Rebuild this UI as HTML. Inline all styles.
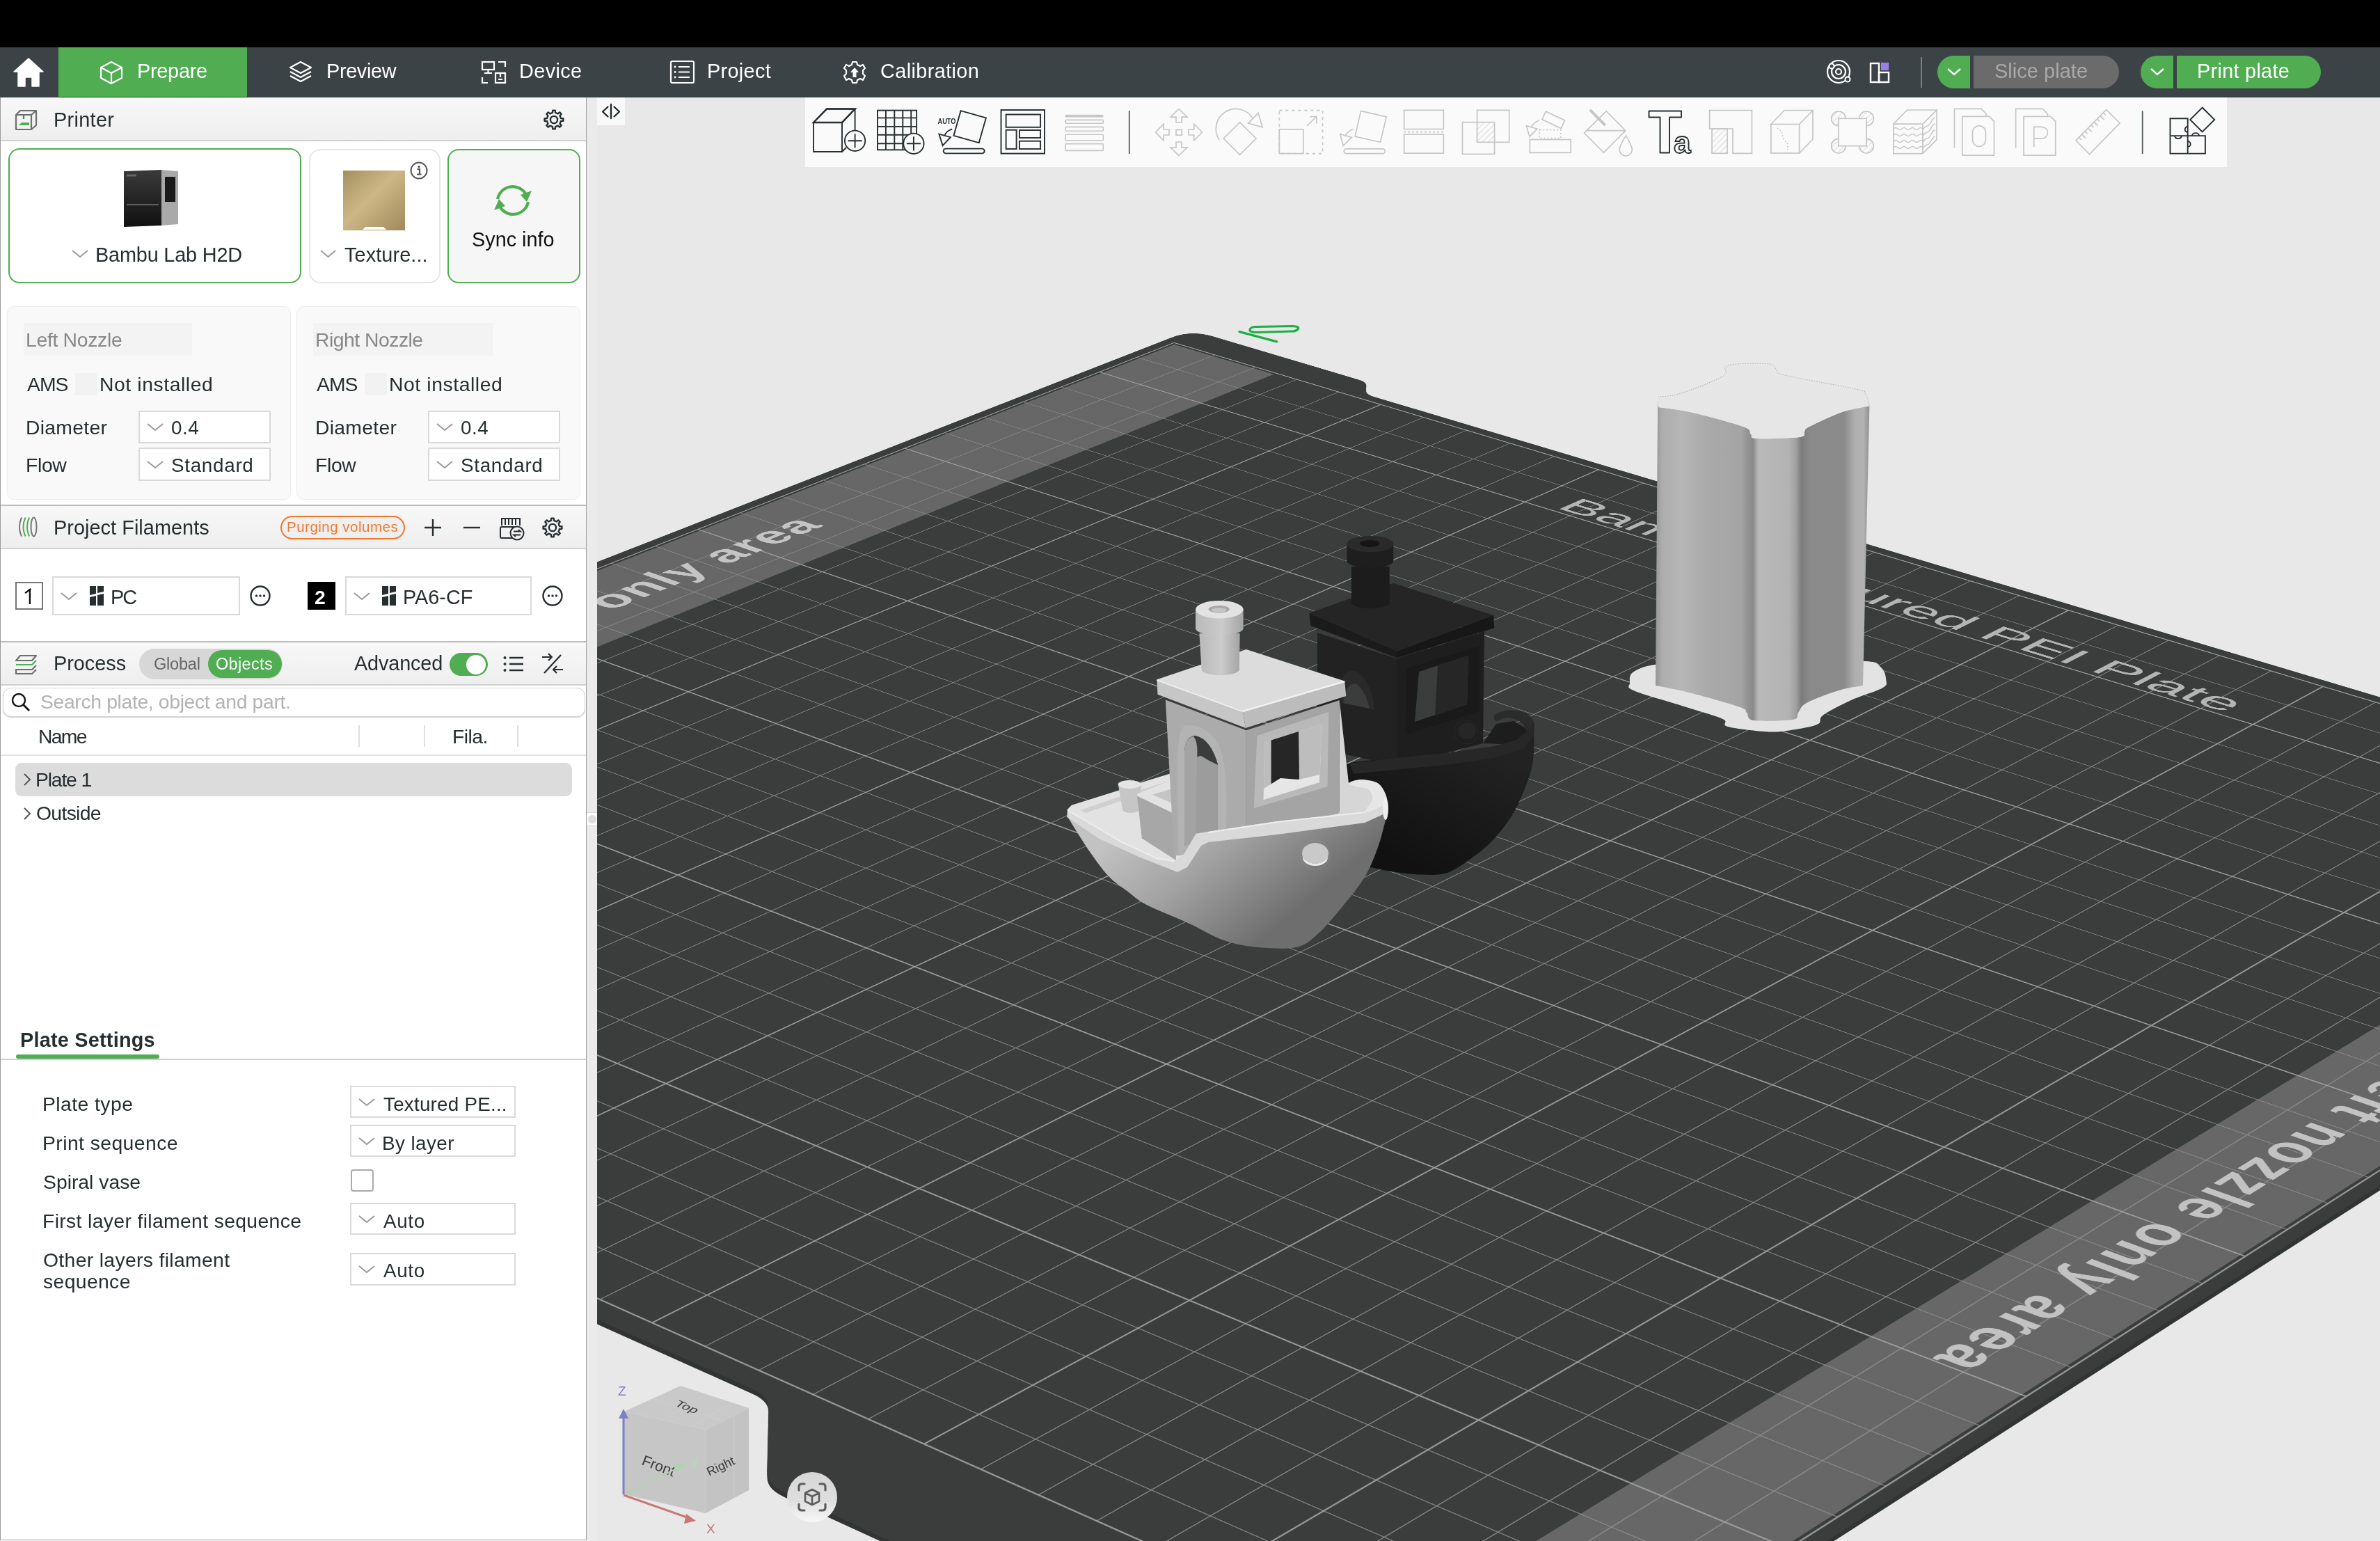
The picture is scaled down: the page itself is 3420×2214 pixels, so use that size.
<!DOCTYPE html><html><head><meta charset="utf-8"><style>
html,body{margin:0;padding:0;}
body{width:3420px;height:2214px;overflow:hidden;position:relative;background:#fff;font-family:"Liberation Sans", sans-serif;}
.t{position:absolute;white-space:nowrap;line-height:normal;font-family:"Liberation Sans", sans-serif;will-change:transform;}
svg{overflow:visible}
</style></head><body>
<div style="position:absolute;left:0px;top:0px;width:3420px;height:68px;background:#000"></div><div style="position:absolute;left:0px;top:68px;width:3420px;height:72px;background:#3c4346"></div><svg style="position:absolute;left:20px;top:82px;" width="44" height="44" viewBox="0 0 44 44" xmlns="http://www.w3.org/2000/svg"><path d="M21,2 L42,21 L36,21 L36,42 L26,42 L26,29 L16,29 L16,42 L6,42 L6,21 L0,21 Z" fill="#fff" stroke="#fff" stroke-width="1.5" stroke-linejoin="round"/></svg><div style="position:absolute;left:84px;top:68px;width:271px;height:72px;background:#50ad52"></div><svg style="position:absolute;left:143px;top:87px;" width="34" height="34" viewBox="0 0 34 34" xmlns="http://www.w3.org/2000/svg"><g fill="none" stroke="#fff" stroke-width="2.2" stroke-linejoin="round"><path d="M17,2 L32,10 L32,25 L17,33 L2,25 L2,10 Z"/><path d="M2,10 L17,18 L32,10 M17,18 L17,33"/></g></svg><div class="t" data-k="Prepare@199" data-tw="98.5" data-tx="199" style="left:197.0px;top:85.9px;font-size:28.84px;letter-spacing:-0.25px;color:#fff;font-weight:normal;">Prepare</div><svg style="position:absolute;left:414px;top:86px;" width="36" height="36" viewBox="0 0 36 36" xmlns="http://www.w3.org/2000/svg"><g fill="none" stroke="#fff" stroke-width="2.2" stroke-linejoin="round"><path d="M18,3 L33,11 L18,19 L3,11 Z"/><path d="M3,17 L18,25 L33,17"/><path d="M3,23 L18,31 L33,23"/></g></svg><div class="t" data-k="Preview@471" data-tw="99" data-tx="471" style="left:469.0px;top:85.9px;font-size:28.84px;letter-spacing:-0.333px;color:#fff;font-weight:normal;">Preview</div><svg style="position:absolute;left:690px;top:86px;" width="40" height="36" viewBox="0 0 40 36" xmlns="http://www.w3.org/2000/svg"><g fill="none" stroke="#fff" stroke-width="2.2"><rect x="3" y="3" width="17" height="11"/><path d="M11.5,14 V19 M6,19 H17"/><path d="M26,3 H36 V10"/><path d="M3,25 V33 H11"/><rect x="22" y="19" width="14" height="14"/><path d="M26,28 H32 M29,19 V25"/></g></svg><div class="t" data-k="Device@748" data-tw="87" data-tx="748" style="left:746.0px;top:85.9px;font-size:28.84px;letter-spacing:0.4px;color:#fff;font-weight:normal;">Device</div><svg style="position:absolute;left:962px;top:86px;" width="38" height="36" viewBox="0 0 38 36" xmlns="http://www.w3.org/2000/svg"><g fill="none" stroke="#fff" stroke-width="2.2"><rect x="2" y="2" width="33" height="31" rx="2"/><path d="M13,10 H29 M13,17.5 H29 M13,25 H29"/></g><g fill="#fff"><circle cx="8" cy="10" r="1.4"/><circle cx="8" cy="17.5" r="1.4"/><circle cx="8" cy="25" r="1.4"/></g></svg><div class="t" data-k="Project@1018" data-tw="90" data-tx="1018" style="left:1016.0px;top:85.9px;font-size:28.84px;letter-spacing:0.333px;color:#fff;font-weight:normal;">Project</div><svg style="position:absolute;left:1212px;top:87px;" width="32" height="34" viewBox="0 0 32 34" xmlns="http://www.w3.org/2000/svg"><g fill="none" stroke="#fff" stroke-width="2.2" stroke-linejoin="round"><path d="M13,2 H19 L20,6 L24,8 L28,6 L31,11 L28,14 L28,19 L31,22 L28,28 L24,26 L20,28 L19,32 H13 L12,28 L8,26 L4,28 L1,22 L4,19 L4,14 L1,11 L4,6 L8,8 L12,6 Z"/></g><path d="M16,10 L22,17 H18.5 V24 H13.5 V17 H10 Z" fill="#fff"/></svg><div class="t" data-k="Calibration@1266" data-tw="139" data-tx="1266" style="left:1265.0px;top:85.9px;font-size:28.84px;letter-spacing:0.4px;color:#fff;font-weight:normal;">Calibration</div><svg style="position:absolute;left:2622px;top:83px;" width="40" height="40" viewBox="0 0 40 40" xmlns="http://www.w3.org/2000/svg"><g fill="none" stroke="#fff" stroke-width="2.2"><circle cx="20" cy="20" r="16"/><circle cx="20" cy="20" r="10"/><circle cx="20" cy="20" r="4"/></g><circle cx="10" cy="12" r="3.5" fill="#3c4346" stroke="#fff" stroke-width="2"/><circle cx="33" cy="31" r="3.5" fill="#3c4346" stroke="#fff" stroke-width="2"/></svg><svg style="position:absolute;left:2685px;top:88px;" width="34" height="34" viewBox="0 0 34 34" xmlns="http://www.w3.org/2000/svg"><g fill="none" stroke="#fff" stroke-width="2.4"><rect x="3" y="3" width="12" height="27"/><rect x="15" y="16" width="14" height="14"/></g><rect x="18" y="2" width="11" height="11" fill="#9b7fe6"/></svg><div style="position:absolute;left:2760px;top:82px;width:2px;height:44px;background:#7a7f82"></div><div style="position:absolute;left:2784px;top:80px;width:47px;height:47px;background:#50ad52;border-radius:23.5px 0 0 23.5px"></div><svg style="position:absolute;left:2797px;top:97px;" width="22" height="12" viewBox="0 0 22 12" xmlns="http://www.w3.org/2000/svg"><polyline points="2,2 11.0,10 20,2" fill="none" stroke="#fff" stroke-width="2.4"/></svg><div style="position:absolute;left:2836px;top:80px;width:209px;height:47px;background:#6b6b6b;border-radius:0 23.5px 23.5px 0"></div><div class="t" data-k="Slice plate@2867" data-tw="132" data-tx="2867" style="left:2866.0px;top:85.9px;font-size:28.84px;letter-spacing:0.1px;color:#a9a9a9;font-weight:normal;">Slice plate</div><div style="position:absolute;left:3076px;top:80px;width:47px;height:47px;background:#50ad52;border-radius:23.5px 0 0 23.5px"></div><svg style="position:absolute;left:3089px;top:97px;" width="22" height="12" viewBox="0 0 22 12" xmlns="http://www.w3.org/2000/svg"><polyline points="2,2 11.0,10 20,2" fill="none" stroke="#fff" stroke-width="2.4"/></svg><div style="position:absolute;left:3128px;top:80px;width:207px;height:47px;background:#50ad52;border-radius:0 23.5px 23.5px 0"></div><div class="t" data-k="Print plate@3159" data-tw="130" data-tx="3159" style="left:3157.0px;top:85.9px;font-size:28.84px;letter-spacing:0.3px;color:#fff;font-weight:normal;">Print plate</div><div style="position:absolute;left:0px;top:139px;width:3420px;height:1px;background:#30363a"></div>
<div style="position:absolute;left:0px;top:140px;width:843px;height:2073px;background:#fff;border-left:1px solid #9c9c9c;border-right:1px solid #9c9c9c;border-bottom:1px solid #9c9c9c;box-sizing:border-box"></div><div style="position:absolute;left:1px;top:140px;width:841px;height:62px;background:linear-gradient(#f8f8f8,#eeeeee)"></div><div style="position:absolute;left:1px;top:201px;width:841px;height:2px;background:#cfcfcf"></div><svg style="position:absolute;left:20px;top:156px;" width="36" height="32" viewBox="0 0 36 32" xmlns="http://www.w3.org/2000/svg"><g fill="none" stroke="#6e6e6e" stroke-width="2.2" stroke-linejoin="round"><path d="M3,9 H25 V30 H3 Z"/><path d="M3,9 L9,3 H32 L25,9 M32,3 V24 L25,30"/><path d="M14,9 V15"/></g><path d="M7,24 L11,20 H22 V24 Z" fill="#50ad52"/></svg><div class="t" data-k="Printer@79" data-tw="85" data-tx="79" style="left:77.0px;top:155.9px;font-size:28.84px;letter-spacing:0.333px;color:#262e30;font-weight:normal;">Printer</div><svg style="position:absolute;left:781px;top:157px;" width="30" height="30" viewBox="0 0 30 30" xmlns="http://www.w3.org/2000/svg"><g fill="none" stroke="#262e30" stroke-width="2.4" stroke-linejoin="round"><path d="M25.06,12.96 L28.39,13.25 L28.39,16.75 L25.06,17.04 L23.55,20.67 L25.70,23.23 L23.23,25.70 L20.67,23.55 L17.04,25.06 L16.75,28.39 L13.25,28.39 L12.96,25.06 L9.33,23.55 L6.77,25.70 L4.30,23.23 L6.45,20.67 L4.94,17.04 L1.61,16.75 L1.61,13.25 L4.94,12.96 L6.45,9.33 L4.30,6.77 L6.77,4.30 L9.33,6.45 L12.96,4.94 L13.25,1.61 L16.75,1.61 L17.04,4.94 L20.67,6.45 L23.23,4.30 L25.70,6.77 L23.55,9.33 Z"/><circle cx="15.0" cy="15.0" r="5.10"/></g></svg><div style="position:absolute;left:12px;top:213px;width:421px;height:194px;border:2.5px solid #50ad52;border-radius:16px;box-sizing:border-box;background:#fff"></div><svg style="position:absolute;left:176px;top:242px;" width="82" height="84" viewBox="0 0 82 84" xmlns="http://www.w3.org/2000/svg"><defs><linearGradient id="pb" x1="0" x2="0" y1="0" y2="1"><stop offset="0" stop-color="#3a3a3a"/><stop offset="1" stop-color="#111"/></linearGradient></defs><path d="M2,4 L56,2 L56,82 L2,84 Z" fill="url(#pb)"/><path d="M56,2 L80,4 L80,80 L56,82 Z" fill="#a9a9a9"/><rect x="61" y="12" width="15" height="36" fill="#1a1a1a"/><path d="M6,52 H52" stroke="#777" stroke-width="1.5"/><path d="M6,10 H20" stroke="#666" stroke-width="3"/></svg><svg style="position:absolute;left:102px;top:358px;" width="26" height="13" viewBox="0 0 26 13" xmlns="http://www.w3.org/2000/svg"><polyline points="2,2 13.0,11 24,2" fill="none" stroke="#9a9a9a" stroke-width="2"/></svg><div class="t" data-k="Bambu Lab H2D@139" data-tw="208" data-tx="139" style="left:137.0px;top:349.9px;font-size:28.84px;letter-spacing:-0.167px;color:#262e30;font-weight:normal;">Bambu Lab H2D</div><div style="position:absolute;left:444px;top:214px;width:189px;height:193px;border:2px solid #e6e6e6;border-radius:16px;box-sizing:border-box;background:#fff"></div><svg style="position:absolute;left:491px;top:242px;" width="93" height="92" viewBox="0 0 93 92" xmlns="http://www.w3.org/2000/svg"><defs><linearGradient id="gold" x1="0" y1="0" x2="1" y2="1"><stop offset="0" stop-color="#a48f5e"/><stop offset="0.45" stop-color="#cdb786"/><stop offset="1" stop-color="#a08a5c"/></linearGradient></defs><rect x="2" y="3" width="89" height="86" fill="url(#gold)"/><path d="M30,88 L34,84 H60 L64,88 Z" fill="#fff"/></svg><svg style="position:absolute;left:588px;top:231px;" width="28" height="28" viewBox="0 0 28 28" xmlns="http://www.w3.org/2000/svg"><circle cx="14" cy="14" r="11.5" fill="none" stroke="#555" stroke-width="2"/><circle cx="14" cy="8.5" r="1.7" fill="#555"/><path d="M11.5,12 H15 V19 M11,19.5 H17.5" stroke="#555" stroke-width="2.2" fill="none"/></svg><svg style="position:absolute;left:459px;top:358px;" width="25" height="13" viewBox="0 0 25 13" xmlns="http://www.w3.org/2000/svg"><polyline points="2,2 12.5,11 23,2" fill="none" stroke="#9a9a9a" stroke-width="2"/></svg><div class="t" data-k="Texture...@495" data-tw="117" data-tx="495" style="left:495.0px;top:349.9px;font-size:28.84px;letter-spacing:0.111px;color:#262e30;font-weight:normal;">Texture...</div><div style="position:absolute;left:643px;top:214px;width:191px;height:193px;border:2.5px solid #50ad52;border-radius:16px;box-sizing:border-box;background:#f6f6f6"></div><svg style="position:absolute;left:702px;top:260px;" width="70" height="56" viewBox="0 0 70 56" xmlns="http://www.w3.org/2000/svg"><g fill="none" stroke="#50ad52" stroke-width="4.2"><path d="M13,26 A22,22 0 0 1 53,18"/><path d="M57,30 A22,22 0 0 1 17,38"/></g><path d="M62,14 L55,30 L46,20 Z" fill="#50ad52"/><path d="M8,42 L15,26 L24,36 Z" fill="#50ad52"/></svg><div class="t" data-k="Sync info@679" data-tw="117" data-tx="679" style="left:678.0px;top:327.9px;font-size:28.84px;letter-spacing:0.0px;color:#111;font-weight:normal;">Sync info</div><div style="position:absolute;left:10px;top:440px;width:408px;height:278px;background:#f9f9f9;border:1.5px solid #ececec;border-radius:10px;box-sizing:border-box"></div><div style="position:absolute;left:34px;top:464px;width:242px;height:47px;background:#f3f3f3"></div><div class="t" data-k="Left Nozzle@39" data-tw="136" data-tx="-1" style="left:37.0px;top:472.4px;font-size:28.32px;letter-spacing:-0.3px;color:#888888;font-weight:normal;">Left Nozzle</div><div class="t" data-k="AMS@39" data-tw="58" data-tx="-1" style="left:39.0px;top:536.4px;font-size:28.32px;letter-spacing:-1.0px;color:#262e30;font-weight:normal;">AMS</div><div style="position:absolute;left:108px;top:536px;width:32px;height:32px;background:#f2f2f2"></div><div class="t" data-k="Not installed@145" data-tw="159" data-tx="-1" style="left:143.0px;top:536.4px;font-size:28.32px;letter-spacing:0.583px;color:#262e30;font-weight:normal;">Not installed</div><div class="t" data-k="Diameter@39" data-tw="115" data-tx="-1" style="left:37.0px;top:598.4px;font-size:28.32px;letter-spacing:0.286px;color:#262e30;font-weight:normal;">Diameter</div><div style="position:absolute;left:199px;top:590px;width:190px;height:47px;background:#fff;border:2px solid #d9d9d9;box-sizing:border-box"></div><svg style="position:absolute;left:210px;top:607.0px;" width="26" height="13.0" viewBox="0 0 26 13.0" xmlns="http://www.w3.org/2000/svg"><polyline points="2,2 13.0,11.0 24,2" fill="none" stroke="#9a9a9a" stroke-width="2"/></svg><div class="t" data-k="0.4@247" data-tw="38" data-tx="-1" style="left:246.0px;top:598.8px;font-size:27.81px;letter-spacing:0.5px;color:#262e30;font-weight:normal;">0.4</div><div class="t" data-k="Flow@39" data-tw="57" data-tx="-1" style="left:37.0px;top:652.4px;font-size:28.32px;letter-spacing:-0.333px;color:#262e30;font-weight:normal;">Flow</div><div style="position:absolute;left:199px;top:643px;width:190px;height:48px;background:#fff;border:2px solid #d9d9d9;box-sizing:border-box"></div><svg style="position:absolute;left:210px;top:660.5px;" width="26" height="13.0" viewBox="0 0 26 13.0" xmlns="http://www.w3.org/2000/svg"><polyline points="2,2 13.0,11.0 24,2" fill="none" stroke="#9a9a9a" stroke-width="2"/></svg><div class="t" data-k="Standard@247" data-tw="115" data-tx="-1" style="left:246.0px;top:652.8px;font-size:27.81px;letter-spacing:0.714px;color:#262e30;font-weight:normal;">Standard</div><div style="position:absolute;left:426px;top:440px;width:408px;height:278px;background:#f9f9f9;border:1.5px solid #ececec;border-radius:10px;box-sizing:border-box"></div><div style="position:absolute;left:450px;top:464px;width:258px;height:47px;background:#f3f3f3"></div><div class="t" data-k="Right Nozzle@455" data-tw="151.6" data-tx="-1" style="left:453.0px;top:472.4px;font-size:28.32px;letter-spacing:-0.491px;color:#888888;font-weight:normal;">Right Nozzle</div><div class="t" data-k="AMS@455" data-tw="58" data-tx="-1" style="left:455.0px;top:536.4px;font-size:28.32px;letter-spacing:-1.0px;color:#262e30;font-weight:normal;">AMS</div><div style="position:absolute;left:524px;top:536px;width:32px;height:32px;background:#f2f2f2"></div><div class="t" data-k="Not installed@561" data-tw="159" data-tx="-1" style="left:559.0px;top:536.4px;font-size:28.32px;letter-spacing:0.583px;color:#262e30;font-weight:normal;">Not installed</div><div class="t" data-k="Diameter@455" data-tw="115" data-tx="-1" style="left:453.0px;top:598.4px;font-size:28.32px;letter-spacing:0.286px;color:#262e30;font-weight:normal;">Diameter</div><div style="position:absolute;left:615px;top:590px;width:190px;height:47px;background:#fff;border:2px solid #d9d9d9;box-sizing:border-box"></div><svg style="position:absolute;left:626px;top:607.0px;" width="26" height="13.0" viewBox="0 0 26 13.0" xmlns="http://www.w3.org/2000/svg"><polyline points="2,2 13.0,11.0 24,2" fill="none" stroke="#9a9a9a" stroke-width="2"/></svg><div class="t" data-k="0.4@663" data-tw="38" data-tx="-1" style="left:662.0px;top:598.8px;font-size:27.81px;letter-spacing:0.5px;color:#262e30;font-weight:normal;">0.4</div><div class="t" data-k="Flow@455" data-tw="57" data-tx="-1" style="left:453.0px;top:652.4px;font-size:28.32px;letter-spacing:-0.333px;color:#262e30;font-weight:normal;">Flow</div><div style="position:absolute;left:615px;top:643px;width:190px;height:48px;background:#fff;border:2px solid #d9d9d9;box-sizing:border-box"></div><svg style="position:absolute;left:626px;top:660.5px;" width="26" height="13.0" viewBox="0 0 26 13.0" xmlns="http://www.w3.org/2000/svg"><polyline points="2,2 13.0,11.0 24,2" fill="none" stroke="#9a9a9a" stroke-width="2"/></svg><div class="t" data-k="Standard@663" data-tw="115" data-tx="-1" style="left:662.0px;top:652.8px;font-size:27.81px;letter-spacing:0.714px;color:#262e30;font-weight:normal;">Standard</div><div style="position:absolute;left:1px;top:725px;width:841px;height:2px;background:#bdbdbd"></div><div style="position:absolute;left:1px;top:727px;width:841px;height:61px;background:linear-gradient(#f8f8f8,#eeeeee)"></div><div style="position:absolute;left:1px;top:787px;width:841px;height:2px;background:#cfcfcf"></div><svg style="position:absolute;left:23px;top:741px;" width="32" height="32" viewBox="0 0 32 32" xmlns="http://www.w3.org/2000/svg"><g fill="none" stroke-width="2"><path d="M8,2.5 Q2,16 8,29.5" stroke="#777"/><path d="M13.5,2.5 Q7.5,16 13.5,29.5" stroke="#50ad52"/><path d="M19,2.5 Q13,16 19,29.5" stroke="#50ad52"/><ellipse cx="25.5" cy="16" rx="4" ry="13.5" stroke="#777"/></g></svg><div class="t" data-k="Project Filaments@79" data-tw="221" data-tx="79" style="left:77.0px;top:741.9px;font-size:28.84px;letter-spacing:0.062px;color:#262e30;font-weight:normal;">Project Filaments</div><div style="position:absolute;left:403px;top:741px;width:179px;height:34px;border:2px solid #f0782c;border-radius:17px;box-sizing:border-box;background:#efefef"></div><div class="t" data-k="Purging volumes@413" data-tw="158" data-tx="412.5" style="left:411.5px;top:745.4px;font-size:20.5px;letter-spacing:0.5px;color:#ef7a2e;font-weight:normal;">Purging volumes</div><svg style="position:absolute;left:608px;top:744px;" width="28" height="28" viewBox="0 0 28 28" xmlns="http://www.w3.org/2000/svg"><path d="M14,2 V26 M2,14 H26" stroke="#262e30" stroke-width="2.4"/></svg><svg style="position:absolute;left:664px;top:744px;" width="28" height="28" viewBox="0 0 28 28" xmlns="http://www.w3.org/2000/svg"><path d="M2,14 H26" stroke="#262e30" stroke-width="2.4"/></svg><svg style="position:absolute;left:717px;top:741px;" width="40" height="36" viewBox="0 0 40 36" xmlns="http://www.w3.org/2000/svg"><g fill="none" stroke="#262e30" stroke-width="2"><path d="M4,14 V4 H30 V14"/><path d="M9,5 V13 M14,5 V13 M19,5 V13 M24,5 V13"/><rect x="2" y="16" width="26" height="16" rx="2"/></g><circle cx="26" cy="25" r="9.5" fill="#f2f2f2" stroke="#262e30" stroke-width="2"/><path d="M21,22.5 H31 L28,20 M31,27.5 H21 L24,30" fill="none" stroke="#262e30" stroke-width="1.8"/></svg><svg style="position:absolute;left:779px;top:743px;" width="30" height="30" viewBox="0 0 30 30" xmlns="http://www.w3.org/2000/svg"><g fill="none" stroke="#262e30" stroke-width="2.4" stroke-linejoin="round"><path d="M25.06,12.96 L28.39,13.25 L28.39,16.75 L25.06,17.04 L23.55,20.67 L25.70,23.23 L23.23,25.70 L20.67,23.55 L17.04,25.06 L16.75,28.39 L13.25,28.39 L12.96,25.06 L9.33,23.55 L6.77,25.70 L4.30,23.23 L6.45,20.67 L4.94,17.04 L1.61,16.75 L1.61,13.25 L4.94,12.96 L6.45,9.33 L4.30,6.77 L6.77,4.30 L9.33,6.45 L12.96,4.94 L13.25,1.61 L16.75,1.61 L17.04,4.94 L20.67,6.45 L23.23,4.30 L25.70,6.77 L23.55,9.33 Z"/><circle cx="15.0" cy="15.0" r="5.10"/></g></svg><div style="position:absolute;left:22px;top:836px;width:40px;height:40px;border:2px solid #777;box-sizing:border-box;background:#fff"></div><svg style="position:absolute;left:30px;top:842px;" width="20" height="30" viewBox="0 0 20 30" xmlns="http://www.w3.org/2000/svg"><path d="M12.9,4 V26" stroke="#0a0a0a" stroke-width="2.3"/><path d="M13.5,4.5 L7,9.5" stroke="#0a0a0a" stroke-width="2.3" stroke-linecap="square"/></svg><div style="position:absolute;left:75px;top:828px;width:270px;height:56px;background:#fff;border:2px solid #d9d9d9;box-sizing:border-box"></div><svg style="position:absolute;left:86px;top:849.5px;" width="26" height="13.0" viewBox="0 0 26 13.0" xmlns="http://www.w3.org/2000/svg"><polyline points="2,2 13.0,11.0 24,2" fill="none" stroke="#9a9a9a" stroke-width="2"/></svg><div class="t" data-k="@161" data-tw="0" data-tx="-1" style="left:161px;top:842.8px;font-size:27.81px;letter-spacing:0px;color:#262e30;font-weight:normal;"></div><div class="t" data-k="PC@161" data-tw="35" data-tx="161" style="left:159.0px;top:841.9px;font-size:28.84px;letter-spacing:-2.0px;color:#262e30;font-weight:normal;">PC</div><svg style="position:absolute;left:128px;top:841px;" width="24" height="30" viewBox="0 0 24 30" xmlns="http://www.w3.org/2000/svg"><path d="M1,1 H10 V12 L1,14 Z M12,1 H21 V9 L12,11 Z M1,17 L10,15 V29 H1 Z M12,14 L21,12 V29 H12 Z" fill="#262e30"/></svg><svg style="position:absolute;left:358px;top:840px;" width="32" height="32" viewBox="0 0 32 32" xmlns="http://www.w3.org/2000/svg"><circle cx="16" cy="16" r="13.5" fill="none" stroke="#262e30" stroke-width="2.4"/><g fill="#262e30"><circle cx="10.5" cy="16" r="1.7"/><circle cx="16" cy="16" r="1.7"/><circle cx="21.5" cy="16" r="1.7"/></g></svg><div style="position:absolute;left:442px;top:836px;width:40px;height:40px;background:#000"></div><div class="t" data-k="2@453" data-tw="0" data-tx="-1" style="left:452.0px;top:842.4px;font-size:28.32px;letter-spacing:0.0px;color:#fff;font-weight:bold;">2</div><div style="position:absolute;left:496px;top:828px;width:268px;height:56px;background:#fff;border:2px solid #d9d9d9;box-sizing:border-box"></div><svg style="position:absolute;left:507px;top:849.5px;" width="26" height="13.0" viewBox="0 0 26 13.0" xmlns="http://www.w3.org/2000/svg"><polyline points="2,2 13.0,11.0 24,2" fill="none" stroke="#9a9a9a" stroke-width="2"/></svg><div class="t" data-k="@581" data-tw="0" data-tx="-1" style="left:581px;top:842.8px;font-size:27.81px;letter-spacing:0px;color:#262e30;font-weight:normal;"></div><div class="t" data-k="PA6-CF@581" data-tw="98" data-tx="581" style="left:579.0px;top:841.9px;font-size:28.84px;letter-spacing:0.0px;color:#262e30;font-weight:normal;">PA6-CF</div><svg style="position:absolute;left:548px;top:841px;" width="24" height="30" viewBox="0 0 24 30" xmlns="http://www.w3.org/2000/svg"><path d="M1,1 H10 V12 L1,14 Z M12,1 H21 V9 L12,11 Z M1,17 L10,15 V29 H1 Z M12,14 L21,12 V29 H12 Z" fill="#262e30"/></svg><svg style="position:absolute;left:778px;top:840px;" width="32" height="32" viewBox="0 0 32 32" xmlns="http://www.w3.org/2000/svg"><circle cx="16" cy="16" r="13.5" fill="none" stroke="#262e30" stroke-width="2.4"/><g fill="#262e30"><circle cx="10.5" cy="16" r="1.7"/><circle cx="16" cy="16" r="1.7"/><circle cx="21.5" cy="16" r="1.7"/></g></svg><div style="position:absolute;left:1px;top:921px;width:841px;height:2px;background:#bdbdbd"></div><div style="position:absolute;left:1px;top:923px;width:841px;height:61px;background:linear-gradient(#f8f8f8,#eeeeee)"></div><div style="position:absolute;left:1px;top:983px;width:841px;height:2px;background:#cfcfcf"></div><svg style="position:absolute;left:21px;top:939px;" width="36" height="32" viewBox="0 0 36 32" xmlns="http://www.w3.org/2000/svg"><g fill="none" stroke-width="2.2" stroke-linejoin="round"><path d="M8,3 H31 L25,10 H2 Z" stroke="#6e6e6e"/><path d="M2,16 H25 L31,10" stroke="#50ad52"/><path d="M31,17 L25,23 H2 L2,29 H25 L31,23" stroke="#6e6e6e"/></g></svg><div class="t" data-k="Process@79" data-tw="101" data-tx="79" style="left:77.0px;top:936.9px;font-size:28.84px;letter-spacing:0.0px;color:#262e30;font-weight:normal;">Process</div><div style="position:absolute;left:200px;top:932px;width:206px;height:44px;background:#d7d7d7;border-radius:22px"></div><div style="position:absolute;left:299px;top:934px;width:106px;height:40px;background:#50ad52;border-radius:20px"></div><div class="t" data-k="Global@222" data-tw="65" data-tx="222" style="left:221.0px;top:940.7px;font-size:23.5px;letter-spacing:-0.2px;color:#666;font-weight:normal;">Global</div><div class="t" data-k="Objects@311" data-tw="80" data-tx="311" style="left:310.0px;top:940.7px;font-size:23.5px;letter-spacing:0.333px;color:#fff;font-weight:normal;">Objects</div><div class="t" data-k="Advanced@509" data-tw="126" data-tx="509" style="left:509.0px;top:936.9px;font-size:28.84px;letter-spacing:-0.143px;color:#262e30;font-weight:normal;">Advanced</div><div style="position:absolute;left:646px;top:938px;width:55px;height:33px;background:#50ad52;border-radius:17px"></div><svg style="position:absolute;left:664px;top:939px;" width="36" height="32" viewBox="0 0 36 32" xmlns="http://www.w3.org/2000/svg"><circle cx="20" cy="16" r="14" fill="#fff"/></svg><svg style="position:absolute;left:722px;top:941px;" width="32" height="28" viewBox="0 0 32 28" xmlns="http://www.w3.org/2000/svg"><g fill="#262e30"><circle cx="3.5" cy="4" r="2"/><circle cx="3.5" cy="13" r="2"/><circle cx="3.5" cy="22" r="2"/></g><path d="M10,4 H30 M10,13 H30 M10,22 H30" stroke="#262e30" stroke-width="2.4"/></svg><svg style="position:absolute;left:777px;top:938px;" width="34" height="34" viewBox="0 0 34 34" xmlns="http://www.w3.org/2000/svg"><g fill="none" stroke="#262e30" stroke-width="2.2" stroke-linejoin="round"><path d="M29,3 L5,29"/><path d="M2,6 H16 M11,1 L16,6 L11,11"/><path d="M32,24 H18 M23,19 L18,24 L23,29"/></g></svg><div style="position:absolute;left:4px;top:988px;width:837px;height:42px;background:#fff;border:1.5px solid #d2d2d2;border-radius:12px;box-sizing:border-box;box-shadow:0 1px 1px #ccc"></div><svg style="position:absolute;left:16px;top:995px;" width="30" height="28" viewBox="0 0 30 28" xmlns="http://www.w3.org/2000/svg"><circle cx="11" cy="11" r="9" fill="none" stroke="#111" stroke-width="2.4"/><path d="M17.5,17.5 L26,26" stroke="#111" stroke-width="2.8"/></svg><div class="t" data-k="Search plate, object and part.@59" data-tw="356" data-tx="59" style="left:58.0px;top:992.4px;font-size:28.32px;letter-spacing:-0.345px;color:#b3b3b3;font-weight:normal;">Search plate, object and part.</div><div class="t" data-k="Name@57" data-tw="68" data-tx="57" style="left:55.0px;top:1042.4px;font-size:28.32px;letter-spacing:-1.667px;color:#262e30;font-weight:normal;">Name</div><div style="position:absolute;left:515px;top:1042px;width:1.5px;height:31px;background:#dedede"></div><div style="position:absolute;left:609px;top:1042px;width:1.5px;height:31px;background:#dedede"></div><div style="position:absolute;left:743px;top:1042px;width:1.5px;height:31px;background:#dedede"></div><div class="t" data-k="Fila.@652" data-tw="47" data-tx="652" style="left:650.0px;top:1042.4px;font-size:28.32px;letter-spacing:-0.5px;color:#262e30;font-weight:normal;">Fila.</div><div style="position:absolute;left:1px;top:1084px;width:841px;height:2px;background:#e4e4e4"></div><div style="position:absolute;left:22px;top:1096px;width:800px;height:48px;background:#dcdcdc;border-radius:9px"></div><svg style="position:absolute;left:32px;top:1110px;" width="16" height="20" viewBox="0 0 16 20" xmlns="http://www.w3.org/2000/svg"><polyline points="3,2 11,10 3,18" fill="none" stroke="#555" stroke-width="2"/></svg><div class="t" data-k="Plate 1@53" data-tw="78" data-tx="53" style="left:51.0px;top:1104.4px;font-size:28.32px;letter-spacing:-1.167px;color:#262e30;font-weight:normal;">Plate 1</div><svg style="position:absolute;left:32px;top:1159px;" width="16" height="20" viewBox="0 0 16 20" xmlns="http://www.w3.org/2000/svg"><polyline points="3,2 11,10 3,18" fill="none" stroke="#555" stroke-width="2"/></svg><div class="t" data-k="Outside@53" data-tw="92" data-tx="53" style="left:52.0px;top:1152.4px;font-size:28.32px;letter-spacing:-0.667px;color:#262e30;font-weight:normal;">Outside</div><div class="t" data-k="Plate Settings@31" data-tw="191" data-tx="31" style="left:29.0px;top:1477.9px;font-size:28.84px;letter-spacing:0.231px;color:#262e30;font-weight:bold;">Plate Settings</div><div style="position:absolute;left:23px;top:1515px;width:206px;height:6px;background:#50ad52;border-radius:3px"></div><div style="position:absolute;left:1px;top:1521px;width:841px;height:2px;background:#cfcfcf"></div><div class="t" data-k="Plate type@63" data-tw="127" data-tx="-1" style="left:61.0px;top:1570.4px;font-size:28.32px;letter-spacing:0.444px;color:#262e30;font-weight:normal;">Plate type</div><div style="position:absolute;left:503px;top:1560px;width:238px;height:46px;background:#fff;border:2px solid #d9d9d9;box-sizing:border-box"></div><svg style="position:absolute;left:514px;top:1576.5px;" width="26" height="13.0" viewBox="0 0 26 13.0" xmlns="http://www.w3.org/2000/svg"><polyline points="2,2 13.0,11.0 24,2" fill="none" stroke="#9a9a9a" stroke-width="2"/></svg><div class="t" data-k="Textured PE...@551" data-tw="175" data-tx="-1" style="left:551.0px;top:1570.8px;font-size:27.81px;letter-spacing:0.231px;color:#262e30;font-weight:normal;">Textured PE...</div><div class="t" data-k="Print sequence@63" data-tw="191.6" data-tx="-1" style="left:61.0px;top:1626.4px;font-size:28.32px;letter-spacing:0.431px;color:#262e30;font-weight:normal;">Print sequence</div><div style="position:absolute;left:503px;top:1616px;width:238px;height:46px;background:#fff;border:2px solid #d9d9d9;box-sizing:border-box"></div><svg style="position:absolute;left:514px;top:1632.5px;" width="26" height="13.0" viewBox="0 0 26 13.0" xmlns="http://www.w3.org/2000/svg"><polyline points="2,2 13.0,11.0 24,2" fill="none" stroke="#9a9a9a" stroke-width="2"/></svg><div class="t" data-k="By layer@551" data-tw="101" data-tx="-1" style="left:549.0px;top:1626.8px;font-size:27.81px;letter-spacing:0.429px;color:#262e30;font-weight:normal;">By layer</div><div class="t" data-k="First layer filament sequence@63" data-tw="369" data-tx="-1" style="left:61.0px;top:1738.4px;font-size:28.32px;letter-spacing:0.357px;color:#262e30;font-weight:normal;">First layer filament sequence</div><div style="position:absolute;left:503px;top:1728px;width:238px;height:46px;background:#fff;border:2px solid #d9d9d9;box-sizing:border-box"></div><svg style="position:absolute;left:514px;top:1744.5px;" width="26" height="13.0" viewBox="0 0 26 13.0" xmlns="http://www.w3.org/2000/svg"><polyline points="2,2 13.0,11.0 24,2" fill="none" stroke="#9a9a9a" stroke-width="2"/></svg><div class="t" data-k="Auto@551" data-tw="58" data-tx="-1" style="left:551.0px;top:1738.8px;font-size:27.81px;letter-spacing:0.667px;color:#262e30;font-weight:normal;">Auto</div><div class="t" data-k="Spiral vase@63" data-tw="138" data-tx="-1" style="left:62.0px;top:1682.4px;font-size:28.32px;letter-spacing:0.0px;color:#262e30;font-weight:normal;">Spiral vase</div><div style="position:absolute;left:504px;top:1680px;width:33px;height:32px;border:2px solid #aaa;border-radius:4px;box-sizing:border-box;background:#fff"></div><div class="t" data-k="Other layers filament@63" data-tw="266.8" data-tx="-1" style="left:62.0px;top:1794.4px;font-size:28.32px;letter-spacing:0.34px;color:#262e30;font-weight:normal;">Other layers filament</div><div class="t" data-k="sequence@63" data-tw="123.6" data-tx="-1" style="left:62.0px;top:1825.4px;font-size:28.32px;letter-spacing:0.371px;color:#262e30;font-weight:normal;">sequence</div><div style="position:absolute;left:503px;top:1800px;width:238px;height:47px;background:#fff;border:2px solid #d9d9d9;box-sizing:border-box"></div><svg style="position:absolute;left:514px;top:1817.0px;" width="26" height="13.0" viewBox="0 0 26 13.0" xmlns="http://www.w3.org/2000/svg"><polyline points="2,2 13.0,11.0 24,2" fill="none" stroke="#9a9a9a" stroke-width="2"/></svg><div class="t" data-k="Auto@551" data-tw="58" data-tx="-1" style="left:551.0px;top:1809.8px;font-size:27.81px;letter-spacing:0.667px;color:#262e30;font-weight:normal;">Auto</div><div style="position:absolute;left:843px;top:140px;width:15px;height:2074px;background:#ebebeb"></div><div style="position:absolute;left:843px;top:1167px;width:15px;height:20px;background:#fafafa;border-top:1px solid #d5d5d5;border-bottom:1px solid #d5d5d5;box-sizing:border-box"></div><svg style="position:absolute;left:844px;top:1170px;" width="14" height="14" viewBox="0 0 14 14" xmlns="http://www.w3.org/2000/svg"><circle cx="7" cy="7" r="6" fill="#dcdcdc"/></svg>
<div style="position:absolute;left:858px;top:140px;width:2562px;height:2074px;overflow:hidden;background:#e8e8e8"><svg style="position:absolute;left:0px;top:0px;" width="2562" height="2074" viewBox="0 0 2562 2074" xmlns="http://www.w3.org/2000/svg"><polygon points="824.4,345.4 832.8,342.6 841.3,340.6 849.9,339.5 858.6,339.2 867.4,339.8 876.3,341.3 885.4,343.5 1093.6,405.4 1096.7,406.4 1099.4,407.6 1101.6,408.8 1103.3,410.1 1104.4,411.5 1105.1,413.0 1105.2,414.6 1104.7,421.0 1104.9,422.5 1105.5,424.0 1106.7,425.4 1108.4,426.8 1110.5,428.0 1113.2,429.2 1116.5,430.2 3265.4,1071.7 3276.1,1075.4 3284.1,1079.1 3289.4,1083.0 3292.1,1086.9 3292.1,1091.0 3289.4,1095.1 3284.0,1099.4 1245.7,2408.6 1234.2,2415.0 1222.3,2419.4 1210.1,2421.9 1197.7,2422.5 1184.9,2421.2 1171.9,2417.9 1158.7,2412.7 268.1,2003.4 261.7,2000.1 256.3,1996.6 251.9,1992.8 248.5,1988.8 246.2,1984.5 244.8,1980.0 244.4,1975.3 246.6,1882.6 246.2,1878.0 244.9,1873.7 242.5,1869.6 239.2,1865.8 235.0,1862.2 229.7,1858.8 223.5,1855.7 -1267.0,1187.5 -1274.0,1183.6 -1278.1,1179.7 -1279.4,1175.7 -1277.9,1171.6 -1273.5,1167.4 -1266.4,1163.1 -1256.4,1158.7" fill="#323333"/><polygon points="824.4,352.4 832.8,349.6 841.3,347.6 849.9,346.5 858.6,346.2 867.4,346.8 876.3,348.3 885.4,350.5 1093.6,412.4 1096.7,413.4 1099.4,414.6 1101.6,415.8 1103.3,417.1 1104.4,418.5 1105.1,420.0 1105.2,421.6 1104.7,428.0 1104.9,429.5 1105.5,431.0 1106.7,432.4 1108.4,433.8 1110.5,435.0 1113.2,436.2 1116.5,437.2 3265.4,1078.7 3276.1,1082.4 3284.1,1086.1 3289.4,1090.0 3292.1,1093.9 3292.1,1098.0 3289.4,1102.1 3284.0,1106.4 1245.7,2415.6 1234.2,2422.0 1222.3,2426.4 1210.1,2428.9 1197.7,2429.5 1184.9,2428.2 1171.9,2424.9 1158.7,2419.7 268.1,2010.4 261.7,2007.1 256.3,2003.6 251.9,1999.8 248.5,1995.8 246.2,1991.5 244.8,1987.0 244.4,1982.3 246.6,1889.6 246.2,1885.0 244.9,1880.7 242.5,1876.6 239.2,1872.8 235.0,1869.2 229.7,1865.8 223.5,1862.7 -1267.0,1194.5 -1274.0,1190.6 -1278.1,1186.7 -1279.4,1182.7 -1277.9,1178.6 -1273.5,1174.4 -1266.4,1170.1 -1256.4,1165.7" fill="#323333"/></svg><div style="position:absolute;left:0;top:0;width:3700px;height:3600px;transform-origin:0 0;transform:matrix3d(0.5338650125,0.1546929036,0,-4.821858118e-05,-0.5725020404,0.1859414573,0,-5.66512748e-05,0,0,1,0,824.3795291,314.5997903,0,1)"><svg width="3700" height="3600" xmlns="http://www.w3.org/2000/svg"><path d="M78.0,85.0 Q78.0,30.0 133.0,30.0 L485.0,30.0 Q505.0,30.0 517.7,45.4 L532.3,63.1 Q545.0,78.5 565.0,78.5 L3575.0,78.5 Q3625.0,78.5 3625.0,128.5 L3625.0,3450.0 Q3625.0,3500.0 3575.0,3500.0 L2550.0,3500.0 Q2520.0,3500.0 2498.8,3478.8 L2381.2,3361.2 Q2360.0,3340.0 2330.0,3340.0 L128.0,3340.0 Q78.0,3340.0 78.0,3290.0 Z" fill="#3b3c3c"/><rect x="107.0" y="107.0" width="243.00000000000003" height="3186.0" fill="#676767"/><rect x="3350.0" y="107.0" width="243.00000000000003" height="3186.0" fill="#676767"/><path d="M200.0,100.0 V3300.0 M300.0,100.0 V3300.0 M400.0,100.0 V3300.0 M500.0,100.0 V3300.0 M700.0,100.0 V3300.0 M800.0,100.0 V3300.0 M900.0,100.0 V3300.0 M1000.0,100.0 V3300.0 M1200.0,100.0 V3300.0 M1300.0,100.0 V3300.0 M1400.0,100.0 V3300.0 M1500.0,100.0 V3300.0 M1700.0,100.0 V3300.0 M1800.0,100.0 V3300.0 M1900.0,100.0 V3300.0 M2000.0,100.0 V3300.0 M2200.0,100.0 V3300.0 M2300.0,100.0 V3300.0 M2400.0,100.0 V3300.0 M2500.0,100.0 V3300.0 M2700.0,100.0 V3300.0 M2800.0,100.0 V3300.0 M2900.0,100.0 V3300.0 M3000.0,100.0 V3300.0 M3200.0,100.0 V3300.0 M3300.0,100.0 V3300.0 M3400.0,100.0 V3300.0 M3500.0,100.0 V3300.0 M100.0,200.0 H3600.0 M100.0,400.0 H3600.0 M100.0,500.0 H3600.0 M100.0,600.0 H3600.0 M100.0,700.0 H3600.0 M100.0,900.0 H3600.0 M100.0,1000.0 H3600.0 M100.0,1100.0 H3600.0 M100.0,1200.0 H3600.0 M100.0,1400.0 H3600.0 M100.0,1500.0 H3600.0 M100.0,1600.0 H3600.0 M100.0,1700.0 H3600.0 M100.0,1900.0 H3600.0 M100.0,2000.0 H3600.0 M100.0,2100.0 H3600.0 M100.0,2200.0 H3600.0 M100.0,2400.0 H3600.0 M100.0,2500.0 H3600.0 M100.0,2600.0 H3600.0 M100.0,2700.0 H3600.0 M100.0,2900.0 H3600.0 M100.0,3000.0 H3600.0 M100.0,3100.0 H3600.0 M100.0,3200.0 H3600.0 " stroke="#8e918f" stroke-width="1.6" fill="none"/><path d="M100.0,100.0 V3300.0 M600.0,100.0 V3300.0 M1100.0,100.0 V3300.0 M1600.0,100.0 V3300.0 M2100.0,100.0 V3300.0 M2600.0,100.0 V3300.0 M3100.0,100.0 V3300.0 M3600.0,100.0 V3300.0 M100.0,100.0 H3600.0 M100.0,300.0 H3600.0 M100.0,800.0 H3600.0 M100.0,1300.0 H3600.0 M100.0,1800.0 H3600.0 M100.0,2300.0 H3600.0 M100.0,2800.0 H3600.0 M100.0,3300.0 H3600.0 " stroke="#9b9e9c" stroke-width="2.8" fill="none"/><text x="0" y="0" transform="translate(253.00000000000003,1148.0) rotate(-90)" text-anchor="end" font-family="Liberation Sans" font-weight="bold" font-size="106.69999999999999" letter-spacing="3.2" fill="#c4c4c4">Right nozzle only area</text><text x="0" y="0" transform="translate(3447.0,2300.0) rotate(90)" text-anchor="end" font-family="Liberation Sans" font-weight="bold" font-size="106.69999999999999" letter-spacing="4.5" fill="#c2c2c2">Left nozzle only area</text><text x="0" y="0" transform="translate(1157.0,287.0)" font-family="Liberation Sans" font-weight="normal" font-size="90.0" textLength="1385.0" lengthAdjust="spacingAndGlyphs" fill="#b4b4b4">Bambu Textured PEI Plate</text></svg></div><div style="position:absolute;left:-858px;top:-140px;width:3420px;height:2214px"><svg style="position:absolute;left:0px;top:0px;pointer-events:none" width="3420" height="2214" viewBox="0 0 3420 2214" xmlns="http://www.w3.org/2000/svg"><g fill="none" stroke="#1eae48" stroke-width="3.2" stroke-linecap="round"><path d="M1781,476.6 L1834.7,490.9"/><path d="M1796,473.5 Q1797,469.5 1806,469.5 L1858,468.5 Q1867,469 1865.5,472.5 Q1863,476 1856,476 L1807,477.5 Q1795,477.5 1796,473.5 Z"/></g><path d="M2346.0,966.3 C2351.6,962.0 2361.5,957.4 2375.5,955.2 C2389.5,953.0 2400.9,953.7 2430.0,953.0 C2459.1,952.3 2508.8,951.5 2550.0,951.0 C2591.2,950.5 2651.5,948.4 2677.0,949.7 C2702.5,951.0 2697.4,954.3 2703.0,958.9 C2708.6,963.5 2710.1,972.5 2710.4,977.4 C2710.7,982.3 2713.3,983.7 2704.9,988.5 C2696.5,993.3 2674.2,999.5 2660.0,1006.0 C2645.8,1012.5 2627.7,1021.7 2619.8,1027.4 C2611.9,1033.1 2619.0,1036.9 2612.4,1040.3 C2605.8,1043.7 2591.7,1046.2 2580.0,1048.0 C2568.3,1049.8 2558.2,1052.1 2542.0,1051.4 C2525.8,1050.7 2493.9,1047.1 2482.8,1044.0 C2471.7,1040.9 2485.9,1037.7 2475.4,1032.9 C2464.9,1028.1 2441.3,1021.8 2420.0,1015.0 C2398.7,1008.2 2360.8,997.9 2347.8,992.2 C2334.8,986.6 2342.5,985.4 2342.2,981.1 C2341.9,976.8 2340.4,970.6 2346.0,966.3 Z" fill="#e3e3e3" /><defs><linearGradient id="colg" gradientUnits="userSpaceOnUse" x1="2379" x2="2687" y1="0" y2="0"><stop offset="0" stop-color="#959595"/><stop offset="0.03" stop-color="#adadad"/><stop offset="0.12" stop-color="#b6b6b6"/><stop offset="0.25" stop-color="#a9a9a9"/><stop offset="0.40" stop-color="#a4a4a4"/><stop offset="0.43" stop-color="#939393"/><stop offset="0.455" stop-color="#8a8a8a"/><stop offset="0.48" stop-color="#b9b9b9"/><stop offset="0.62" stop-color="#b3b3b3"/><stop offset="0.655" stop-color="#a0a0a0"/><stop offset="0.68" stop-color="#7c7c7c"/><stop offset="0.72" stop-color="#8a8a8a"/><stop offset="0.88" stop-color="#8b8b8b"/><stop offset="0.93" stop-color="#afafaf"/><stop offset="0.97" stop-color="#b2b2b2"/><stop offset="1" stop-color="#8e8e8e"/></linearGradient></defs><path d="M2382.2,570.3 L2383.0,585.0 C2391.0,586.2 2410.7,587.8 2431.0,592.5 C2451.3,597.2 2490.8,607.8 2505.0,613.0 C2519.2,618.2 2512.8,621.2 2516.0,624.0 C2519.2,626.8 2512.3,629.3 2524.0,630.0 C2535.7,630.7 2574.5,629.7 2586.0,628.0 C2597.5,626.3 2590.7,622.5 2593.0,620.0 C2595.3,617.5 2591.2,617.6 2600.0,613.0 C2608.8,608.4 2631.3,597.5 2645.7,592.5 C2660.1,587.5 2679.6,584.8 2686.4,583.3  L2677,985 L2677.0,985.0 C2671.2,986.2 2655.5,987.8 2642.0,992.0 C2628.5,996.2 2605.7,1004.7 2596.0,1010.0 C2586.3,1015.3 2587.3,1020.0 2584.0,1024.0 C2580.7,1028.0 2586.7,1032.2 2576.0,1034.0 C2565.3,1035.8 2531.0,1036.7 2520.0,1035.0 C2509.0,1033.3 2513.3,1027.2 2510.0,1024.0 C2506.7,1020.8 2513.2,1020.7 2500.0,1016.0 C2486.8,1011.3 2451.2,1001.2 2431.0,996.0 C2410.8,990.8 2387.7,986.8 2379.0,985.0  Z" fill="url(#colg)"/><path d="M2382.2,570.3 C2387.9,569.4 2400.7,569.7 2416.2,564.8 C2431.7,559.9 2464.9,546.9 2475.4,540.7 C2485.9,534.5 2476.0,530.8 2479.1,527.8 C2482.2,524.8 2483.5,523.8 2494.0,523.0 C2504.5,522.2 2532.1,521.6 2542.0,523.0 C2551.9,524.4 2549.5,528.9 2553.2,531.5 C2556.9,534.1 2545.2,534.3 2564.3,538.9 C2583.4,543.5 2648.5,554.6 2667.9,559.2 C2687.3,563.8 2677.7,562.6 2680.8,566.6 C2683.9,570.6 2685.5,580.5 2686.4,583.3  L2686.4,583.3 C2679.6,584.8 2660.1,587.5 2645.7,592.5 C2631.3,597.5 2608.8,608.4 2600.0,613.0 C2591.2,617.6 2595.3,617.5 2593.0,620.0 C2590.7,622.5 2597.5,626.3 2586.0,628.0 C2574.5,629.7 2535.7,630.7 2524.0,630.0 C2512.3,629.3 2519.2,626.8 2516.0,624.0 C2512.8,621.2 2519.2,618.2 2505.0,613.0 C2490.8,607.8 2451.3,597.2 2431.0,592.5 C2410.7,587.8 2391.0,586.2 2383.0,585.0  Z" fill="#e6e6e6"/><path d="M2382.2,570.3 C2387.9,569.4 2400.7,569.7 2416.2,564.8 C2431.7,559.9 2464.9,546.9 2475.4,540.7 C2485.9,534.5 2476.0,530.8 2479.1,527.8 C2482.2,524.8 2483.5,523.8 2494.0,523.0 C2504.5,522.2 2532.1,521.6 2542.0,523.0 C2551.9,524.4 2549.5,528.9 2553.2,531.5 C2556.9,534.1 2545.2,534.3 2564.3,538.9 C2583.4,543.5 2648.5,554.6 2667.9,559.2 C2687.3,563.8 2677.7,562.6 2680.8,566.6 C2683.9,570.6 2685.5,580.5 2686.4,583.3 " fill="none" stroke="#a9a9a9" stroke-width="1" stroke-dasharray="1.5,2"/><defs><linearGradient id="bhull" gradientUnits="userSpaceOnUse" x1="2150" y1="1080" x2="2050" y2="1256"><stop offset="0" stop-color="#222"/><stop offset="1" stop-color="#111"/></linearGradient></defs><polygon points="1893.0,909.0 2007.0,946.0 2007.0,1100.0 1893.0,1075.0" fill="#222222" /><polygon points="2007.0,946.0 2133.0,907.0 2131.0,1068.0 2007.0,1100.0" fill="#1e1e1e" /><polygon points="2131.0,1068.0 2150.0,1040.0 2175.0,1036.0 2192.0,1046.0 2196.0,1062.0 2180.0,1070.0" fill="#1d1d1d" /><path d="M2148.3,1027.0 C2150.8,1024.4 2159.1,1021.3 2165.2,1020.5 C2171.3,1019.7 2179.7,1020.8 2185.0,1022.0 C2190.3,1023.2 2194.1,1025.5 2197.2,1028.0 C2200.3,1030.5 2202.7,1033.0 2203.8,1037.0 C2204.9,1041.0 2205.3,1047.8 2204.0,1052.0 C2202.7,1056.2 2198.0,1063.0 2196.0,1062.0 C2194.0,1061.0 2194.2,1050.3 2192.0,1046.0 C2189.8,1041.7 2187.3,1038.5 2183.0,1036.0 C2178.7,1033.5 2171.5,1031.0 2166.0,1031.0 C2160.5,1031.0 2152.9,1036.7 2150.0,1036.0 C2147.1,1035.3 2145.8,1029.6 2148.3,1027.0 Z" fill="#2b2b2b" /><path d="M1939.4,1096.7 C1952.3,1093.2 1981.8,1091.6 2005.3,1089.1 C2028.8,1086.6 2057.0,1084.4 2080.5,1081.6 C2104.0,1078.8 2129.8,1075.3 2146.4,1072.2 C2163.0,1069.1 2171.8,1066.9 2180.3,1062.8 C2188.8,1058.7 2193.3,1049.6 2197.2,1047.7 C2201.1,1045.8 2202.9,1044.0 2203.8,1051.5 C2204.8,1059.0 2204.6,1080.4 2202.9,1092.9 C2201.2,1105.5 2198.2,1114.2 2193.5,1126.8 C2188.8,1139.3 2182.4,1155.0 2174.6,1168.2 C2166.8,1181.4 2155.8,1195.5 2146.4,1205.8 C2137.0,1216.1 2129.2,1222.3 2118.2,1230.3 C2107.2,1238.3 2093.1,1249.4 2080.5,1253.8 C2067.9,1258.2 2055.4,1256.8 2042.9,1256.6 C2030.4,1256.4 2016.6,1254.5 2005.3,1252.9 C1994.0,1251.3 1985.2,1250.0 1975.2,1247.2 C1965.2,1244.4 1952.5,1247.2 1945.0,1236.0 C1937.5,1224.8 1932.8,1201.0 1930.0,1180.0 C1927.2,1159.0 1926.4,1123.9 1928.0,1110.0 C1929.6,1096.1 1926.5,1100.2 1939.4,1096.7 Z" fill="url(#bhull)" /><polygon points="1939.4,1096.7 2005.3,1089.1 2080.5,1081.6 2146.4,1072.2 2180.3,1062.8 2197.2,1047.7 2203.8,1036.5 2204.5,1052.0 2202.9,1059.0 2189.7,1076.0 2146.4,1089.1 2080.5,1098.6 2005.3,1106.1 1945.0,1111.7" fill="#272727" /><polygon points="2022.0,960.0 2126.0,928.0 2126.0,1022.0 2020.0,1055.0" fill="#1a1a1a" /><polygon points="2039.0,965.0 2110.0,942.0 2108.0,1012.0 2033.0,1037.0" fill="#3b3c3c" /><polygon points="2066.0,956.0 2110.0,942.0 2108.0,1012.0 2062.0,1028.0" fill="#262626" /><path d="M1920,1000 Q1925,958 1950,965 Q1972,980 1975,1020 L1968,1018 Q1962,990 1948,982 Q1935,985 1930,1010 Z" fill="#2a2a2a"/><path d="M1930,1010 Q1935,980 1948,982 Q1962,990 1968,1018 Z" fill="#3b3c3c"/><circle cx="2107" cy="1052" r="17" fill="none" stroke="#242424" stroke-width="1.5"/><ellipse cx="2108" cy="1050" rx="13" ry="12" fill="#262626"/><polygon points="1881.5,880.8 2007.3,935.4 2007.3,945.3 1883.2,899.0" fill="#1b1b1b" /><polygon points="2007.3,935.4 2146.2,884.1 2147.2,902.3 2007.3,945.3" fill="#171717" /><polygon points="1881.5,880.8 2002.3,837.8 2146.2,884.1 2007.3,935.4" fill="#252525" /><path d="M1942,814 V866 A27.3,8 0 0 0 1996.7,866 V814 Z" fill="#1c1c1c"/><path d="M1935.4,781.5 V806 A33.4,10 0 0 0 2002.3,806 V781.5 Z" fill="#1e1e1e"/><ellipse cx="1968.8" cy="781.5" rx="33.4" ry="11.6" fill="#2a2a2a"/><ellipse cx="1968.5" cy="781" rx="14" ry="5" fill="#151515"/><defs><linearGradient id="whull" gradientUnits="userSpaceOnUse" x1="1640" y1="1170" x2="1800" y2="1362"><stop offset="0" stop-color="#c2c2c2"/><stop offset="0.45" stop-color="#a2a2a2"/><stop offset="1" stop-color="#6e6e6e"/></linearGradient><linearGradient id="wchim" x1="0" x2="1" y1="0" y2="0"><stop offset="0" stop-color="#b9b9b9"/><stop offset="0.55" stop-color="#cbcbcb"/><stop offset="1" stop-color="#a4a4a4"/></linearGradient></defs><polygon points="1533.2,1163.6 1540.0,1156.8 1605.4,1136.3 1640.8,1124.1 1680.4,1111.8 1700.0,1110.0 1700.0,1240.0 1688.5,1237.2 1661.3,1233.1 1606.8,1207.2 1552.3,1174.5" fill="#e2e2e2" /><polygon points="1552.3,1164.3 1606.8,1145.2 1680.4,1122.0 1680.4,1130.0 1606.8,1152.0 1560.0,1168.0" fill="#cfcfcf" /><path d="M1607,1128 L1613,1163 A12,5 0 0 0 1637,1163 L1640,1128 Z" fill="#c6c6c6"/><ellipse cx="1623" cy="1127" rx="16.5" ry="6" fill="#e4e4e4"/><polygon points="1634.0,1143.0 1688.0,1169.0 1690.0,1236.0 1640.8,1204.5" fill="#a7a7a7" /><polygon points="1634.0,1140.4 1680.4,1122.0 1690.0,1122.0 1690.0,1170.0 1684.4,1167.7 1634.0,1143.5" fill="#e2e2e2" /><polygon points="1655.8,1141.8 1683.1,1133.6 1690.0,1133.0 1690.0,1156.0 1684.4,1154.0" fill="#c4c4c4" /><polygon points="1924.7,1006.0 1938.0,1125.2 1955.0,1120.0 1978.0,1124.2 1988.5,1135.7 1992.7,1152.5 1990.6,1169.0 1961.2,1169.3 1835.1,1188.2 1924.7,1165.0" fill="#d6d6d6" /><polygon points="1674.8,1005.6 1790.8,1049.2 1790.8,1205.0 1687.3,1230.0" fill="#ababab" /><polygon points="1790.8,1049.2 1924.7,1006.0 1924.7,1168.0 1790.8,1205.0" fill="#a4a4a4" /><path d="M1693.5,1230.0 C1693.5,1203.0 1690.2,1099.2 1693.5,1067.9 C1696.8,1036.6 1704.0,1043.0 1713.0,1042.2 C1722.0,1041.4 1739.2,1051.1 1747.2,1063.2 C1755.2,1075.3 1758.7,1091.0 1761.2,1114.6 C1763.7,1138.2 1761.9,1189.9 1762.0,1205.0 " fill="#b3b3b3" /><path d="M1702,1215 V1075 Q1704,1057 1718,1057 Q1740,1062 1750.3,1100 V1208 Z" fill="#9c9c9c"/><path d="M1702,1080 Q1704,1057 1718,1057 Q1740,1062 1750.3,1099 Q1738,1094 1726,1086 Q1716,1086 1712,1096 L1712,1110 Z" fill="#3b3c3c"/><path d="M1702,1215 V1080 Q1703,1060 1715,1058 Q1722,1066 1720,1090 L1718,1212 Z" fill="#a3a3a3"/><polygon points="1806.4,1057.0 1909.2,1022.7 1907.6,1130.2 1801.7,1161.3" fill="#b9b9b9" /><polygon points="1817.3,1066.3 1899.8,1040.6 1896.0,1123.9 1815.7,1148.9" fill="#e6e6e6" /><polygon points="1817.3,1066.3 1899.8,1040.6 1896.0,1123.9 1815.7,1148.9" fill="#bdbdbd" /><polygon points="1826.6,1063.5 1866.0,1051.0 1867.1,1119.3 1826.6,1132.0" fill="#262626" /><polygon points="1815.7,1148.9 1896.0,1123.9 1896.0,1113.0 1866.0,1120.0 1840.0,1118.0 1816.0,1133.0" fill="#e6e6e6" /><path d="M1533.2,1171.8 L1579.5,1201.7 L1634.0,1226.3 L1688.5,1244.0 L1702.2,1229.0 L1719.9,1200.4 L1734.9,1197.7 L1835.1,1186.0 L1961.2,1169.0 L1990.6,1160.0 L1990.6,1179.8 C1988.8,1186.1 1984.9,1204.3 1980.0,1217.6 C1975.1,1230.9 1969.6,1245.7 1961.2,1259.7 C1952.8,1273.7 1940.9,1288.1 1929.7,1301.7 C1918.5,1315.3 1904.9,1331.8 1894.0,1341.6 C1883.1,1351.4 1877.8,1357.2 1864.5,1360.5 C1851.2,1363.8 1831.2,1363.0 1814.0,1361.6 C1796.8,1360.2 1779.1,1357.9 1761.6,1352.1 C1744.1,1346.3 1728.0,1335.6 1709.0,1326.9 C1690.0,1318.2 1662.4,1307.7 1647.6,1300.0 C1632.8,1292.3 1629.5,1287.6 1620.4,1280.8 C1611.3,1274.0 1602.2,1268.5 1593.1,1259.0 C1584.0,1249.5 1574.5,1235.8 1565.9,1223.5 C1557.3,1211.2 1545.5,1191.8 1541.4,1185.4  Z" fill="url(#whull)"/><polygon points="1533.9,1164.3 1552.3,1174.5 1606.8,1207.2 1661.3,1233.1 1688.5,1237.2 1702.0,1226.0 1718.5,1197.7 1734.9,1194.9 1835.1,1180.0 1961.2,1166.0 1978.0,1160.0 1990.6,1150.0 1992.0,1168.0 1961.2,1182.0 1835.1,1199.0 1736.0,1210.0 1726.0,1215.0 1706.0,1246.0 1692.0,1253.0 1634.0,1230.0 1579.5,1205.0 1533.2,1174.0" fill="#d9d9d9" /><path d="M1533.9,1164.3 L1552.3,1174.5 L1606.8,1207.2 L1661.3,1233.1 L1688.5,1237.2 M1736,1196 L1835.1,1181 L1961.2,1167 L1990.6,1151" stroke="#ededed" stroke-width="2" fill="none"/><path d="M1938.0,1125.2 C1939.2,1123.5 1948.3,1120.2 1955.0,1120.0 C1961.7,1119.8 1972.4,1121.6 1978.0,1124.2 C1983.6,1126.8 1986.0,1131.0 1988.5,1135.7 C1991.0,1140.4 1994.5,1148.1 1992.7,1152.5 C1991.0,1156.9 1983.2,1159.6 1978.0,1162.0 C1972.8,1164.4 1962.2,1169.3 1961.2,1167.0 C1960.2,1164.7 1971.2,1153.5 1972.0,1148.0 C1972.8,1142.5 1970.0,1137.0 1966.0,1134.0 C1962.0,1131.0 1952.7,1131.5 1948.0,1130.0 C1943.3,1128.5 1936.8,1126.9 1938.0,1125.2 Z" fill="#e6e6e6" /><ellipse cx="1991" cy="1162" rx="4" ry="16" fill="#eeeeee"/><circle cx="1890" cy="1228" r="21" fill="none" stroke="#a3a3a3" stroke-width="0.8" stroke-dasharray="1,1.5"/><ellipse cx="1890" cy="1226" rx="19" ry="15" fill="#c9c9c9"/><path d="M1871,1226 A19,15 0 0 0 1909,1226 L1908,1232 A18,12 0 0 1 1872,1232 Z" fill="#ebebeb"/><polygon points="1662.4,976.3 1785.5,1021.3 1790.0,1046.0 1663.5,997.8" fill="#c6c6c6" /><polygon points="1785.5,1021.3 1932.2,978.5 1934.3,999.9 1790.0,1046.0" fill="#bcbcbc" /><polygon points="1662.4,976.3 1790.9,933.1 1932.2,978.5 1785.5,1021.3" fill="#dcdcdc" /><path d="M1785.5,1022 L1932.2,979" stroke="#f2f2f2" stroke-width="2.5"/><path d="M1662.4,977 L1785.5,1022" stroke="#eeeeee" stroke-width="2"/><path d="M1723.4,910 L1726.6,962 A27,8 0 0 0 1780.8,962 L1781.7,910 Z" fill="url(#wchim)"/><path d="M1718,875.7 V903 A34.3,9.5 0 0 0 1786.6,903 V875.7 Z" fill="url(#wchim)"/><ellipse cx="1752.3" cy="875.7" rx="34.3" ry="12.8" fill="#e2e2e2"/><ellipse cx="1751.7" cy="875.3" rx="15" ry="5.4" fill="#a6a6a6"/><ellipse cx="1751.7" cy="876.5" rx="11" ry="3.5" fill="#c4c4c4"/><polygon points="897.0,2028.0 1014.0,2054.0 1014.0,2174.0 897.0,2147.0" fill="#c6c6c6" /><polygon points="1014.0,2054.0 1076.0,2023.0 1076.0,2141.0 1014.0,2174.0" fill="#c3c3c3" /><polygon points="978.0,1991.0 1076.0,2023.0 1014.0,2054.0 897.0,2028.0" fill="#c9c9c9" /><g stroke="#d6d6d6" stroke-width="0.8" fill="none" stroke-dasharray="2,2"><path d="M937,2009 L1035,2040 M1016,2003 L960,2036 M1052,2016 L994,2049"/></g><g stroke="#d0d0d0" stroke-width="0.8" fill="none"><path d="M1014,2054 V2174 M1055,2033 V2152"/></g><text transform="translate(968,2019) rotate(22) skewX(-25) scale(1.2,0.85)" font-family="Liberation Sans" font-size="17" fill="#3e3e3e">Top</text><text transform="translate(921,2104) rotate(21)" font-family="Liberation Sans" font-size="21" fill="#3a3a3a">Front</text><text transform="translate(1019,2121) rotate(-25)" font-family="Liberation Sans" font-size="18" fill="#3a3a3a">Right</text><path d="M897,2147 L976,2108" stroke="#add5ad" stroke-width="2"/><path d="M986,2103 L969,2103 L976,2115 Z" fill="#add5ad"/><text x="993" y="2106" font-family="Liberation Sans" font-size="22" fill="#b3d9b3">y</text><path d="M896,2147 V2035" stroke="#7c7fc9" stroke-width="3"/><path d="M896,2024 L889,2038 H903 Z" fill="#7c7fc9"/><text x="888" y="2005" font-family="Liberation Sans" font-size="19" fill="#7c7fc9">Z</text><path d="M896,2148 L990,2181" stroke="#c87878" stroke-width="3"/><path d="M1000,2185 L986,2175 L983,2189 Z" fill="#c87878"/><text x="1015" y="2203" font-family="Liberation Sans" font-size="19" fill="#c87878">X</text><defs><linearGradient id="camg" x1="0" y1="0" x2="0" y2="1"><stop offset="0" stop-color="#d7d7d7"/><stop offset="0.55" stop-color="#dedede"/><stop offset="1" stop-color="#f7f7f7"/></linearGradient></defs><circle cx="1167" cy="2151" r="36" fill="url(#camg)"/><g fill="none" stroke="#5e5e5e" stroke-width="3.2" stroke-linecap="round" stroke-linejoin="round"><path d="M1148,2141 V2136 Q1148,2132 1152,2132 H1156 M1178,2132 H1182 Q1186,2132 1186,2136 V2141 M1186,2161 V2166 Q1186,2170 1182,2170 H1178 M1156,2170 H1152 Q1148,2170 1148,2166 V2161"/><path d="M1167,2140 L1177,2145 V2157 L1167,2162 L1157,2157 V2145 Z M1157,2145 L1167,2150 L1177,2145 M1167,2150 V2162" stroke-width="2.6"/></g></svg></div></div>
<div style="position:absolute;left:858px;top:140px;width:40px;height:40px;background:#f8f8f8"></div><svg style="position:absolute;left:858px;top:140px;" width="40" height="40" viewBox="0 0 40 40" xmlns="http://www.w3.org/2000/svg"><g fill="none" stroke="#1e2628" stroke-width="2.3" stroke-linecap="round" stroke-linejoin="round"><polyline points="15.5,13.5 8,20.5 15.5,27.5"/><polyline points="24.5,13.5 32,20.5 24.5,27.5"/><path d="M20,10 V30"/></g></svg><div style="position:absolute;left:1157px;top:140px;width:2043px;height:100px;background:#fafafa"></div><svg style="position:absolute;left:0px;top:0px;pointer-events:none" width="3420" height="260" viewBox="0 0 3420 260" xmlns="http://www.w3.org/2000/svg"><g fill="none" stroke="#262e30" stroke-width="1.9" stroke-linejoin="miter"><path d="M1169,176 H1210 V218 H1169 Z"/><path d="M1169,176 L1188,156.5 H1228.6 L1210,176 M1228.6,156.5 V188 M1210,218 L1216,212"/><circle cx="1228.6" cy="202.3" r="14.7"/><path d="M1218.5,202.3 H1238.7 M1228.6,192.2 V212.4"/></g><path d="M1169,176 L1188,156.5 H1228.6 L1210,176 Z" fill="none" stroke="#262e30" stroke-width="2.4"/><g fill="none" stroke="#262e30" stroke-width="1.9" stroke-linejoin="miter"><rect x="1261" y="158.6" width="56.1" height="56.7"/><path d="M1272.9,158.6 V215.3 M1285.3,158.6 V215.3 M1297.3,158.6 V215.3 M1309.2,158.6 V215.3 M1261,169.4 H1317 M1261,181.9 H1317 M1261,193.8 H1317 M1261,206.3 H1317 "/></g><circle cx="1312.9" cy="206.3" r="14.7" fill="#fafafa" stroke="#262e30" stroke-width="1.9"/><path d="M1302.8,206.3 H1323 M1312.9,196.2 V216.4" stroke="#262e30" stroke-width="1.9"/><g fill="none" stroke="#262e30" stroke-width="1.9" stroke-linejoin="miter"><path d="M1380.6,159.2 L1416.9,169.4 L1406.7,205.1 L1370.4,194.9 Z"/><path d="M1368.2,185.3 Q1360,188 1357,195"/><path d="M1349.4,192.6 L1365.9,197.2 L1354.6,209.1 Z"/><rect x="1355.7" y="213.6" width="59" height="6.8" rx="3.4"/></g><text x="1347.5" y="178" font-family="Liberation Sans" font-weight="bold" font-size="11.5" fill="#262e30" textLength="26" lengthAdjust="spacingAndGlyphs">AUTO</text><g fill="none" stroke="#262e30" stroke-width="1.9" stroke-linejoin="miter"><rect x="1438.5" y="158" width="62.5" height="62.6"/><rect x="1445.6" y="164.5" width="49.5" height="18.3"/><rect x="1445.6" y="186.7" width="15" height="27.3"/><rect x="1464.9" y="187" width="30.2" height="11"/><rect x="1464.9" y="202.7" width="30.2" height="11.3"/></g><rect x="1530.3" y="164.7" width="55.4" height="3.8" rx="1.9" fill="#c6c6c6"/><g fill="none" stroke="#c6c6c6" stroke-width="1.6" stroke-linejoin="miter"><rect x="1531" y="172.4" width="54.3" height="4.8" rx="1"/><rect x="1531" y="182.4" width="54.3" height="5.8" rx="1"/><rect x="1531" y="193.2" width="54.3" height="8.5" rx="1"/><rect x="1531" y="206.6" width="54.3" height="9.8" rx="1"/></g><path d="M1622.8,159 V221 M3078.7,159.3 V221" stroke="#555a5c" stroke-width="1.8"/><g fill="none" stroke="#c6c6c6" stroke-width="1.7" stroke-linejoin="miter"><path d="M1694,156.5 L1706,168.2 H1698 V176 H1690 V168.2 H1682 Z"/><path d="M1694,223.5 L1706,211.8 H1698 V204 H1690 V211.8 H1682 Z"/><path d="M1660.5,190 L1672.2,178 V186 H1680 V194 H1672.2 V202 Z"/><path d="M1727.5,190 L1715.8,178 V186 H1708 V194 H1715.8 V202 Z"/><rect x="1690" y="186.4" width="8.3" height="7.8"/></g><g fill="none" stroke="#c6c6c6" stroke-width="1.7" stroke-linejoin="miter"><path d="M1781.6,175.6 L1805,199 L1781.6,222.4 L1758.2,199 Z"/><path d="M1752.1,201 A28,28 0 0 1 1799.7,169.2"/><path d="M1808.1,162.4 L1814.1,182.8 L1793.7,177.1 Z"/></g><g fill="none" stroke="#c6c6c6" stroke-width="1.7" stroke-linejoin="miter"><rect x="1838.3" y="158.6" width="62.3" height="62" stroke-dasharray="4,5"/><rect x="1838.3" y="185.8" width="34.5" height="34.8"/><path d="M1878,181 L1891,168 M1882,167.5 H1892 V177.5"/></g><g fill="none" stroke="#c6c6c6" stroke-width="1.7" stroke-linejoin="miter"><path d="M1955.5,159.4 L1992.3,168 L1983.5,204.3 L1947.2,196 Z"/><path d="M1944.2,185.5 Q1937,188 1933,195"/><path d="M1925.8,192.6 L1942.4,197.5 L1930.1,209.3 Z"/><rect x="1931.3" y="213.8" width="59" height="6.8" rx="3.4"/></g><g fill="none" stroke="#c6c6c6" stroke-width="1.7" stroke-linejoin="miter"><rect x="2017.6" y="158.3" width="56.7" height="27.2"/><rect x="2017.6" y="193.1" width="56.7" height="27.1"/><path d="M2017,189.6 H2075" stroke-dasharray="3,3"/></g><defs><pattern id="hp" width="6" height="6" patternUnits="userSpaceOnUse" patternTransform="rotate(45)"><path d="M0,0 V6" stroke="#c6c6c6" stroke-width="1.2"/></pattern></defs><rect x="2122.5" y="175.6" width="25.1" height="28.7" fill="url(#hp)"/><g fill="none" stroke="#c6c6c6" stroke-width="1.7" stroke-linejoin="miter"><rect x="2122.5" y="158.3" width="46.2" height="46"/><rect x="2101.5" y="175.6" width="46.1" height="45.8"/></g><g fill="none" stroke="#c6c6c6" stroke-width="1.7" stroke-linejoin="miter"><path d="M2221.3,160.1 L2248.5,173 L2243.2,184.6 L2216,171.5 Z"/><path d="M2211.5,173 Q2204,176 2201,182"/><path d="M2193.3,180.5 L2208.8,185.1 L2197.9,196.4 Z"/><rect x="2198.3" y="200.5" width="58.9" height="18.9"/><rect x="2212.2" y="186.6" width="30.7" height="12.1" stroke-dasharray="2,3"/></g><g fill="none" stroke="#c6c6c6" stroke-width="1.7" stroke-linejoin="miter"><path d="M2308.3,159.7 L2335.8,187.7 L2304.5,219.4 L2276.5,191.1 Z M2280,187.7 H2335.8"/><path d="M2336.3,194.9 C2330,205 2327.2,210 2327.2,215 A9,9 0 0 0 2345.3,215 C2345.3,210 2342.5,205 2336.3,194.9 Z"/></g><path d="M2284.8,157.9 L2306.8,180.1" stroke="#c6c6c6" stroke-width="4"/><path d="M2369.5,159.5 H2416 V168.5 H2399 V219.5 H2385.5 V168.5 H2369.5 Z" fill="none" stroke="#262e30" stroke-width="1.9" stroke-linejoin="round"/><text x="2405" y="219.5" font-family="Liberation Sans" font-weight="bold" font-size="44" fill="#fafafa" stroke="#262e30" stroke-width="1.9">a</text><rect x="2460" y="185" width="22.1" height="35.3" fill="url(#hp)"/><g fill="none" stroke="#c6c6c6" stroke-width="1.7" stroke-linejoin="miter"><path d="M2456.6,158.5 H2517.4 V220.3 H2490 V185 H2456.6 Z"/><rect x="2460" y="185" width="22.1" height="35.3"/></g><g fill="none" stroke="#c6c6c6" stroke-width="1.7" stroke-linejoin="miter"><rect x="2544.9" y="178.5" width="40.7" height="41.5"/><path d="M2544.9,178.5 L2564,158.5 H2605 L2585.6,178.5 M2605,158.5 V200 L2585.6,220"/><path d="M2554,184 L2560,189 L2563,200 L2569,207 L2569,220" stroke-dasharray="1.5,3"/></g><g fill="url(#hp)" stroke="#c6c6c6" stroke-width="1.7"><circle cx="2641.9" cy="170.3" r="10.3"/><circle cx="2641.9" cy="209.7" r="10.3"/><circle cx="2682.1" cy="170.3" r="10.3"/><circle cx="2682.1" cy="209.7" r="10.3"/></g><rect x="2641.9" y="170.3" width="40.2" height="39.4" fill="#fafafa" stroke="#c6c6c6" stroke-width="1.7"/><g fill="none" stroke="#c6c6c6" stroke-width="1.7" stroke-linejoin="miter"><rect x="2720.9" y="178.1" width="42" height="42.6"/><path d="M2720.9,178.1 L2740.5,158 H2783 L2762.9,178.1 M2783,158 V200.6 L2762.9,220.7"/><path d="M2721,185 q3,-3 6,0 t6,0 t6,0 t6,0 t6,0 t6,0 t6,0 M2721,194 q3,-3 6,0 t6,0 t6,0 t6,0 t6,0 t6,0 t6,0 M2721,203 q3,-3 6,0 t6,0 t6,0 t6,0 t6,0 t6,0 t6,0 M2721,212 q3,-3 6,0 t6,0 t6,0 t6,0 t6,0 t6,0 t6,0 M2763,187 q3,-6 6,-6 t6,-6 t6,-6M2763,196 q3,-6 6,-6 t6,-6 t6,-6M2763,205 q3,-6 6,-6 t6,-6 t6,-6M2763,214 q3,-6 6,-6 t6,-6 t6,-6" stroke-width="1.4"/></g><g fill="none" stroke="#c6c6c6" stroke-width="1.7" stroke-linejoin="miter"><path d="M2808.4,212.6 V156.4 H2847 L2854.1,163.5 V167.4"/><path d="M2819.8,223.2 V167.4 H2858.5 L2865.5,174.4 V223.2 Z"/></g><g fill="none" stroke="#c6c6c6" stroke-width="1.7" stroke-linejoin="miter"><path d="M2896.6,212.6 V156.4 H2935.2 L2942.2999999999997,163.5 V167.4"/><path d="M2908.0,223.2 V167.4 H2946.7 L2953.7,174.4 V223.2 Z"/></g><g fill="none" stroke="#c6c6c6" stroke-width="1.7" stroke-linejoin="miter"><rect x="2834.5" y="180.6" width="18.9" height="29.9" rx="9.45"/><path d="M2922.7,210.9 V182.3 H2934 A8.4,8.4 0 0 1 2934,199.1 H2922.7"/></g><g fill="none" stroke="#c6c6c6" stroke-width="1.7" stroke-linejoin="miter"><path d="M2982.9,201.8 L3026.6,157.6 L3046.2,176.9 L3002.5,221.5 Z"/><path d="M2987.3,197.4 l3.5,3.5 M2991.6,193.0 l5.6,5.6 M2996.0,188.5 l3.5,3.5 M3000.4,184.1 l5.6,5.6 M3004.8,179.7 l3.5,3.5 M3009.1,175.3 l5.6,5.6 M3013.5,170.9 l3.5,3.5 M3017.9,166.4 l5.6,5.6 M3022.2,162.0 l3.5,3.5 "/></g><g fill="none" stroke="#262e30" stroke-width="1.9" stroke-linejoin="miter"><path d="M3118.5,170.2 H3143.7 V220.6 H3118.5 Z M3118.5,195.1 H3168.9 V220.6 H3143.7"/><path d="M3143.7,182 a4,4 0 0 0 0,8 M3125,195.1 a5,4 0 0 0 10,0 M3143.7,203 a4,4 0 0 1 0,8 M3150,195.1 a5,4 0 0 1 10,0"/><path d="M3164.7,154.5 L3182.2,172 L3164.7,189.5 L3147.2,172 Z"/></g></svg>
</body></html>
